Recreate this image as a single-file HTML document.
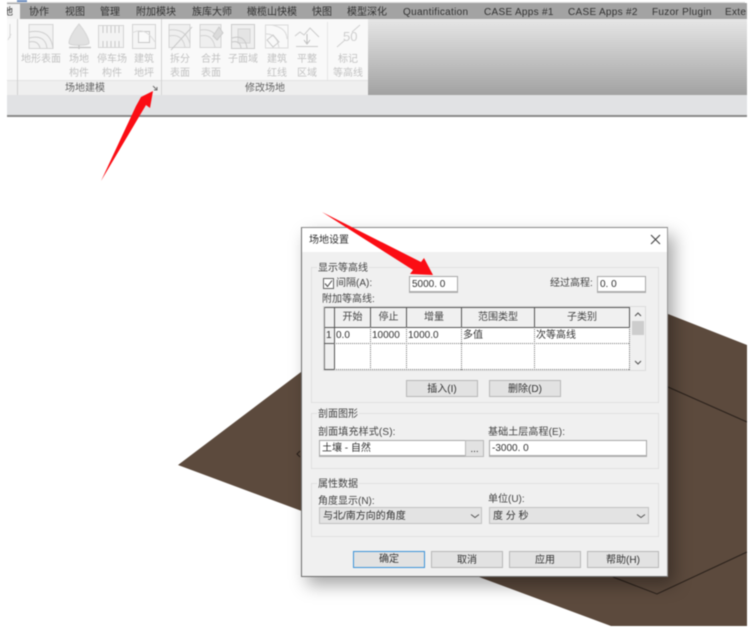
<!DOCTYPE html>
<html><head><meta charset="utf-8">
<style>
html,body{margin:0;padding:0;background:#fff;}
#p{position:relative;width:752px;height:628px;overflow:hidden;background:#fff;font-family:"Liberation Sans","Noto Sans CJK SC",sans-serif;filter:blur(.55px);}
#p div,#p span.a{position:absolute;box-sizing:border-box;}
.t{white-space:nowrap;line-height:14px;height:14px;}
.tab{top:6px;font-size:10px;color:#333;white-space:nowrap;line-height:14px;}
.rb{font-size:10px;color:#c2c2c2;text-align:center;line-height:14px;white-space:nowrap;transform:translateX(-50%);}
.pl{font-size:10px;color:#666;line-height:14px;white-space:nowrap;transform:translateX(-50%);top:82px;}
.l{font-size:10px;color:#444;white-space:nowrap;line-height:14px;}
.grp{border:1px solid #e0e0e0;}
.inp{background:#fff;border:1px solid #a8a8a8;border-bottom:2px solid #b0b0b0;font-size:10px;color:#333;line-height:16px;padding-left:2px;white-space:nowrap;}
.btn{background:#e2e2e2;border:1px solid #b8b8b8;font-size:10px;color:#333;text-align:center;line-height:17px;white-space:nowrap;}
.sel{background:#e3e3e3;border:1px solid #c2c2c2;font-size:10px;color:#333;line-height:17px;padding-left:3px;white-space:pre;}
.c{font-size:10px;color:#333;line-height:14px;white-space:nowrap;}
.h{font-size:10px;color:#444;line-height:14px;text-align:center;top:311px;white-space:nowrap;}
</style></head><body>
<div id="p">
<svg style="position:absolute;left:0;top:0" width="752" height="628">
<polygon points="178,465 301,372 640,302 668,314 747,345 747,626 611,626" fill="#5c4a3d"/>
<path d="M668,387L747,422M613,577L657,594L747,552" stroke="#2a211b" stroke-width="1" fill="none"/>
<path d="M300,451L297,454L300,457" stroke="#2a211b" fill="none"/>
</svg>

<!-- top -->
<div style="left:7px;top:2px;width:738px;height:1px;background:#d8d8d8"></div>
<div style="left:17px;top:0;width:10px;height:2px;background:#6a8cc0"></div>
<div style="left:7px;top:3px;width:740px;height:16px;background:#a3a3a3"></div>
<div style="left:7px;top:4px;width:13px;height:15px;background:#f2f2f2"></div>
<div class="tab" style="left:7px;width:7px;overflow:hidden;color:#333;text-indent:-4px">地</div>
<div class="tab" style="left:29px">协作</div>
<div class="tab" style="left:65px">视图</div>
<div class="tab" style="left:100px">管理</div>
<div class="tab" style="left:136px">附加模块</div>
<div class="tab" style="left:192px">族库大师</div>
<div class="tab" style="left:247px">橄榄山快模</div>
<div class="tab" style="left:312px">快图</div>
<div class="tab" style="left:347px">模型深化</div>
<div class="tab" style="left:403px;letter-spacing:.3px">Quantification</div>
<div class="tab" style="left:484px;letter-spacing:.3px">CASE Apps #1</div>
<div class="tab" style="left:568px;letter-spacing:.3px">CASE Apps #2</div>
<div class="tab" style="left:652px;letter-spacing:.3px">Fuzor Plugin</div>
<div class="tab" style="left:725px;width:22px;overflow:hidden;letter-spacing:.3px">Extensions</div>

<!-- ribbon -->
<div style="left:7px;top:19px;width:361px;height:61px;background:#f9f9f9"></div>
<div style="left:7px;top:80px;width:361px;height:15px;background:#efefef;border-top:1px solid #e2e2e2"></div>
<div style="left:368px;top:19px;width:379px;height:76px;background:linear-gradient(#e6e6e6,#a2a2a2)"></div>
<div style="left:7px;top:95px;width:740px;height:22px;background:#e1e2e4;border-bottom:2px solid #8a8a8a"></div>
<div style="left:17px;top:19px;width:1px;height:76px;background:#d0d0d0"></div>
<div style="left:161px;top:19px;width:1px;height:76px;background:#d4d4d4"></div>
<div style="left:327px;top:22px;width:1px;height:58px;background:#e6e6e6"></div>

<svg style="position:absolute;left:0;top:0;opacity:.72" width="400" height="100" fill="none" stroke="#c6c6c6" stroke-width="1">
<path d="M10,24V38M8,40L11,34" stroke="#cfcfcf"/>
<rect x="29" y="24.5" width="24" height="24" fill="#f0f0f0"/>
<path d="M29,38Q45,34 47,48M29,32Q50,28 53,48M29,42Q38,40 40,48" stroke="#bdbdbd"/>
<path d="M79,24C74,30 69,38 69,43C69,46 89,46 89,43C89,38 84,30 79,24Z" fill="#d8d8d8" stroke="#c8c8c8"/>
<path d="M69,47.5H91M79,45V49" stroke="#b4b4b4" stroke-width="1.5"/>
<rect x="98.5" y="25.5" width="25" height="22" fill="#f2f2f2"/>
<path d="M103,26V33M107,26V33M111,26V33M115,26V33M119,26V33M103,41V47M107,41V47M111,41V47M115,41V47M119,41V47" stroke="#b8b8b8"/>
<rect x="132.5" y="24.500" width="23" height="24" fill="#f4f4f4"/>
<rect x="138.5" y="31.5" width="11" height="11" fill="#fbfbfb" stroke="#b4b4b4"/>
<path d="M132,33Q145,26 155,42" stroke="#d2d2d2"/>
<rect x="169" y="24.5" width="21" height="23" fill="#ececec"/>
<path d="M169,36Q182,33 185,47M169,30Q186,28 190,44" stroke="#c4c4c4"/>
<path d="M171,50L192,27" stroke="#b8b8b8"/>
<rect x="200" y="24.5" width="21" height="23" fill="#ececec"/>
<path d="M200,36Q212,33 215,47M200,30Q214,28 218,40" stroke="#c4c4c4"/>
<path d="M213,36L219,27L223,33L217,40Z" fill="#d0d0d0" stroke="#bbb"/>
<rect x="231.5" y="24.5" width="23" height="24" fill="#ececec" stroke="#bcbcbc"/>
<rect x="238" y="29" width="12" height="14" fill="#dcdcdc" stroke="#c8c8c8"/>
<path d="M232,38Q245,34 247,48M232,42Q240,40 241,48" stroke="#b4b4b4"/>
<path d="M265.5,25H288V48H265.5ZM265,34Q277,33 279,48M272,25Q287,28 287,39" stroke="#cfcfcf"/>
<path d="M267,40L273,35L279,42L273,47Z" stroke="#bcbcbc"/>
<path d="M295,36L300,32L304,35L310,28L319,37" stroke="#bcbcbc"/>
<path d="M307,34V43M304,40L307,44L310,40" stroke="#a8a8a8"/>
<path d="M296,46.5H318" stroke="#b8b8b8"/>
<path d="M337,47L345,40M352,32L360,25" stroke="#c0c0c0"/>
</svg>
<svg style="position:absolute;left:150px;top:84px" width="10" height="10" fill="none" stroke="#707070"><path d="M3,2L7,6M7,3V6H4"/></svg>
<div class="t" style="left:343px;top:30px;font-size:13px;color:#cfcfcf">50</div>

<div class="rb" style="left:41px;top:53px">地形表面</div>
<div class="rb" style="left:79px;top:53px">场地<br>构件</div>
<div class="rb" style="left:112px;top:53px">停车场<br>构件</div>
<div class="rb" style="left:144px;top:53px">建筑<br>地坪</div>
<div class="rb" style="left:180px;top:53px">拆分<br>表面</div>
<div class="rb" style="left:211px;top:53px">合并<br>表面</div>
<div class="rb" style="left:243px;top:53px">子面域</div>
<div class="rb" style="left:277px;top:53px">建筑<br>红线</div>
<div class="rb" style="left:307px;top:53px">平整<br>区域</div>
<div class="rb" style="left:348px;top:53px">标记<br>等高线</div>
<div class="pl" style="left:85px">场地建模</div>
<div class="pl" style="left:265px">修改场地</div>

<!-- dialog -->
<div style="left:301px;top:227px;width:367px;height:350px;background:#f0f0f0;border:1px solid #6f6f6f;border-top-color:#8a8a8a;border-right-color:#999;box-shadow:6px 8px 16px rgba(0,0,0,.35)"></div>
<div style="left:302px;top:228px;width:365px;height:24px;background:#fff"></div>
<div class="l" style="left:309px;top:234px;color:#333">场地设置</div>
<svg style="position:absolute;left:650px;top:234px" width="11" height="11"><path d="M1,1L10,10M10,1L1,10" stroke="#444" stroke-width="1.1" fill="none"/></svg>

<div class="grp" style="left:311px;top:267px;width:348px;height:136px"></div>
<div class="l" style="left:317px;top:263px;background:#f0f0f0;padding:0 1px;height:12px;line-height:12px">显示等高线</div>
<div style="left:323px;top:278px;width:11px;height:11px;background:#fff;border:1px solid #666"></div>
<svg style="position:absolute;left:323px;top:278px" width="11" height="11"><path d="M2,5.5L4.5,8.5L9,2.5" stroke="#444" fill="none"/></svg>
<div class="l" style="left:336px;top:277px">间隔(A):</div>
<div class="inp" style="left:409px;top:276px;width:49px;height:17px">5000. 0</div>
<div class="l" style="left:550px;top:277px">经过高程:</div>
<div class="inp" style="left:597px;top:276px;width:49px;height:17px">0. 0</div>
<div class="l" style="left:322px;top:293px">附加等高线:</div>

<!-- table -->
<div style="left:323px;top:306px;width:323px;height:65px;background:#f0f0f0;border:1px solid #dcdcdc"></div>
<div style="left:334px;top:327px;width:295px;height:43px;background:#fff"></div>
<div style="left:324px;top:307px;width:305px;height:1px;background:#555"></div>
<div style="left:324px;top:326.5px;width:305px;height:1px;background:#555"></div>
<div style="left:334px;top:307px;width:1px;height:62px;background:#555"></div>
<div style="left:324px;top:307px;width:1px;height:62px;background:#777"></div>
<div style="left:324px;top:343px;width:10px;height:1px;background:#555"></div>
<div style="left:324px;top:369px;width:10px;height:1px;background:#555"></div>
<div style="left:370px;top:307px;width:1px;height:20px;background:#555"></div>
<div style="left:406px;top:307px;width:1px;height:20px;background:#555"></div>
<div style="left:461px;top:307px;width:1px;height:20px;background:#555"></div>
<div style="left:534px;top:307px;width:1px;height:20px;background:#555"></div>
<div style="left:629px;top:307px;width:1px;height:20px;background:#555"></div>
<div style="left:370px;top:327px;height:43px;border-left:1px dotted #777"></div>
<div style="left:406px;top:327px;height:43px;border-left:1px dotted #777"></div>
<div style="left:461px;top:327px;height:43px;border-left:1px dotted #777"></div>
<div style="left:534px;top:327px;height:43px;border-left:1px dotted #777"></div>
<div style="left:629px;top:327px;height:43px;border-left:1px dotted #777"></div>
<div style="left:334px;top:343px;width:295px;border-top:1px dotted #777"></div>
<div style="left:334px;top:369px;width:295px;border-top:1px dotted #777"></div>
<div class="h" style="left:335px;width:35px">开始</div>
<div class="h" style="left:371px;width:35px">停止</div>
<div class="h" style="left:407px;width:54px">增量</div>
<div class="h" style="left:462px;width:72px">范围类型</div>
<div class="h" style="left:535px;width:94px">子类别</div>
<div class="c" style="left:326px;top:329px">1</div>
<div class="c" style="left:336px;top:329px">0.0</div>
<div class="c" style="left:372px;top:329px">10000</div>
<div class="c" style="left:408px;top:329px">1000.0</div>
<div class="c" style="left:463px;top:329px">多值</div>
<div class="c" style="left:536px;top:329px">次等高线</div>
<div style="left:632px;top:321px;width:12px;height:14px;background:#cdcdcd"></div>
<svg style="position:absolute;left:632px;top:310px" width="12" height="60" fill="none" stroke="#555" stroke-width="1.1"><path d="M3,6L6,3L9,6M3,51L6,54L9,51"/></svg>

<div class="btn" style="left:406px;top:380px;width:72px;height:17px">插入(I)</div>
<div class="btn" style="left:489px;top:380px;width:72px;height:17px">删除(D)</div>

<div class="grp" style="left:311px;top:413px;width:348px;height:56px"></div>
<div class="l" style="left:317px;top:409px;background:#f0f0f0;padding:0 1px;height:12px;line-height:12px">剖面图形</div>
<div class="l" style="left:318px;top:426px;letter-spacing:.15px">剖面填充样式(S):</div>
<div class="l" style="left:488px;top:426px;letter-spacing:.1px">基础土层高程(E):</div>
<div class="inp" style="left:319px;top:440px;width:147px;height:17px">土壤 - 自然</div>
<div class="btn" style="left:465px;top:440px;width:19px;height:17px;line-height:18px">...</div>
<div class="inp" style="left:489px;top:440px;width:158px;height:17px">-3000. 0</div>

<div class="grp" style="left:311px;top:483px;width:348px;height:54px"></div>
<div class="l" style="left:317px;top:479px;background:#f0f0f0;padding:0 1px;height:12px;line-height:12px">属性数据</div>
<div class="l" style="left:318px;top:495px">角度显示(N):</div>
<div class="l" style="left:488px;top:493px">单位(U):</div>
<div class="sel" style="left:319px;top:507px;width:163px;height:17px">与北/南方向的角度</div>
<div class="sel" style="left:489px;top:507px;width:160px;height:17px">度 分 秒</div>
<svg style="position:absolute;left:300px;top:500px" width="360" height="30" fill="none" stroke="#555"><path d="M171,14.5L175,17.5L179,14.5M337,14.5L341,17.5L345,14.5"/></svg>

<div class="btn" style="left:353px;top:551px;width:72px;height:17px;border:1.5px solid #3d93d8;line-height:16px">确定</div>
<div class="btn" style="left:431px;top:551px;width:72px;height:17px">取消</div>
<div class="btn" style="left:509px;top:551px;width:72px;height:17px">应用</div>
<div class="btn" style="left:587px;top:551px;width:72px;height:17px">帮助(H)</div>

<!-- arrows -->
<svg style="position:absolute;left:0;top:0" width="752" height="628">
<polygon points="153,91 150,108 146,105 101,181 136,106 141,97" fill="#fb0d14"/>
<polygon points="433,275 410,274 413,270 322,212 421,262 424,258" fill="#fb0d14"/>
</svg>
</div>
</body></html>
